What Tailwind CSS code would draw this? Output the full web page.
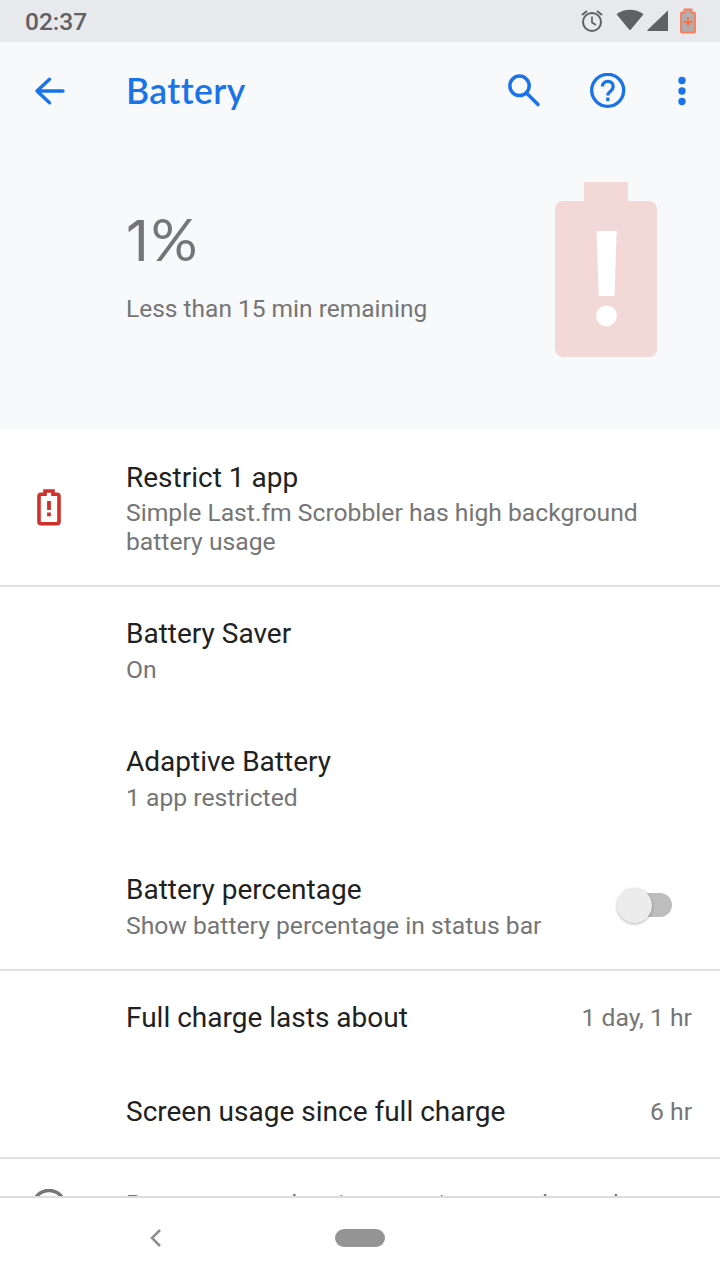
<!DOCTYPE html>
<html lang="en">
<head>
<meta charset="utf-8">
<title>Battery</title>
<script src="https://cdn.jsdelivr.net/npm/@tailwindcss/browser@4"></script>
</head>
<body class="w-[720px] h-[1280px] overflow-hidden bg-white font-['Roboto',sans-serif] text-[#212121] flex flex-col">
  <header class="h-[42px] shrink-0 bg-[#e8e9ed] text-[#5f6165] flex items-center justify-between pl-[25px] pr-6">
    <span class="text-[24.5px] leading-7 font-medium pt-[2px]">02:37</span>
    <div class="flex items-center">
      <svg class="w-6 h-6 mr-3" viewBox="0 0 24 24" fill="none" stroke="currentColor" stroke-width="2"><circle cx="12" cy="13" r="9"/><path d="M12 7.500v6l4 2.500" stroke-width="1.700"/><path d="M2 6l5-4M22 6l-5-4"/></svg>
      <svg class="w-[28px] h-6 mr-[3px]" viewBox="0 0 28 24" fill="currentColor"><path d="M.5 5.200C8.500 -.6 19.500 -.6 27.500 5.200L14.900 20.500q-.9 1-1.800 0z"/></svg>
      <svg class="w-[22px] h-6 mr-[11px]" viewBox="0 0 22 24" fill="currentColor"><path d="M21 2v20H.8q-1 0-.3-.9L20.100 2.200q.9-.7.900-.2z"/></svg>
      <svg class="w-4 h-[26px]" viewBox="0 0 16 26"><path d="M4.500 4.500V1.500h7v3H14q1 0 1 1v18q0 1-1 1H2q-1 0-1-1v-18q0-1 1-1z" fill="#b4adad" stroke="#f77e5b" stroke-width="1.900"/><path d="M8 9.500v9M3.700 14h8.600" stroke="#f77147" stroke-width="2"/></svg>
    </div>
  </header>

  <section class="h-[387px] shrink-0 bg-[#f8f9fb]">
    <div class="h-[98px] flex items-center text-[#1a73e8] pl-[34px] pr-[34px]">
      <svg class="w-8 h-8 mr-[60px]" viewBox="0 0 32 32" fill="none" stroke="currentColor" stroke-width="3.400" stroke-linecap="round" stroke-linejoin="round"><path d="M29 16H3M15.500 4.200L3 16l12.500 11.800"/></svg>
      <h1 class="flex-1 font-['Lato',sans-serif] text-[35.5px] leading-10 font-semibold tracking-[0.4px]">Battery</h1>
      <svg class="w-9 h-9 mr-[47px]" viewBox="0 0 36 36" fill="none" stroke="currentColor" stroke-width="3.500"><circle cx="12.500" cy="12.800" r="9.700"/><path d="M19.500 20L31 31.500" stroke-width="3.600" stroke-linecap="round"/></svg>
      <svg class="w-9 h-9 mr-[52px]" viewBox="0 0 36 36" fill="none" stroke="currentColor" stroke-width="3.300"><circle cx="17.700" cy="17.300" r="16"/><path d="M12.400 13.600c0-6.800 10.800-7.100 10.800-.1 0 4.700-5.400 4.600-5.400 8.900"/><path d="M17.800 24.500v3.600"/></svg>
      <svg class="w-2 h-8" viewBox="0 0 8 32" fill="currentColor"><circle cx="4" cy="5.500" r="3.700"/><circle cx="4" cy="16" r="3.700"/><circle cx="4" cy="26.500" r="3.700"/></svg>
    </div>
    <div class="flex items-start justify-between pl-[126px] pr-[63px] text-[#757575]">
      <div class="pt-[66px]">
        <p class="font-['Lato',sans-serif] text-[58px] leading-[66px] flex items-baseline"><span class="font-['Inter',sans-serif] text-[56px] w-[25px]">1</span><span>%</span></p>
        <p class="text-[24.5px] leading-[29px] mt-5">Less than 15 min remaining</p>
      </div>
      <svg class="w-[102px] h-[176px] mt-[41px]" viewBox="0 0 102 176"><path d="M29 1h44v19h20q9 0 9 9v138q0 9-9 9H9q-9 0-9-9V29q0-9 9-9h20z" fill="#f3d8d8"/><path d="M41.500 50h20.200L59.500 115H43.800z" fill="#fff"/><circle cx="51.500" cy="134.800" r="10.400" fill="#fff"/></svg>
    </div>
  </section>

  <main class="flex-1 min-h-0 overflow-hidden">
    <section class="h-[156px] flex items-center">
      <div class="w-[126px] pl-9">
        <svg class="w-[26px] h-[37px]" viewBox="0 0 26 37"><path d="M9 5.300V2h8v3.300H21q2 0 2 2v25.500q0 2-2 2H5q-2 0-2-2V7.300q0-2 2-2z" fill="none" stroke="#d0302b" stroke-width="3.600"/><path d="M13 12v9M13 23.500v3.700" stroke="#d0302b" stroke-width="3.800"/></svg>
      </div>
      <div class="pt-[3px]">
        <h2 class="text-[28px] leading-[33px] mb-1">Restrict 1 app</h2>
        <p class="text-[24.700px] leading-[29px] text-[#757575]">Simple Last.fm Scrobbler has high background<br>battery usage</p>
      </div>
    </section>

    <section class="relative pl-[126px] before:absolute before:left-0 before:top-0 before:h-[2px] before:w-full before:bg-[#e0e0e0]">
      <div class="h-32 flex flex-col justify-center pt-[3px]">
        <h2 class="text-[28px] leading-[33px] mb-[5px]">Battery Saver</h2>
        <p class="text-[24.700px] leading-[29px] text-[#757575]">On</p>
      </div>
      <div class="h-32 flex flex-col justify-center pt-[3px]">
        <h2 class="text-[28px] leading-[33px] mb-[5px]">Adaptive Battery</h2>
        <p class="text-[24.700px] leading-[29px] text-[#757575]">1 app restricted</p>
      </div>
      <div class="h-32 flex items-center justify-between pr-12 pt-[3px]">
        <div>
          <h2 class="text-[28px] leading-[33px] mb-[5px]">Battery percentage</h2>
          <p class="text-[24.700px] leading-[29px] text-[#757575]">Show battery percentage in status bar</p>
        </div>
        <div class="w-[56px] h-9 flex items-center relative justify-end mb-[2px]">
          <div class="w-11 h-6 rounded-full bg-[#bdbdbd] mb-px"></div>
          <div class="absolute left-[1px] top-0 w-[35px] h-[35px] rounded-full bg-[#ececec] shadow-[0_1px_3px_rgba(0,0,0,0.3)]"></div>
        </div>
      </div>
    </section>

    <section class="relative pl-[126px] pr-[28px] before:absolute before:left-0 before:top-0 before:h-[2px] before:w-full before:bg-[#e0e0e0]">
      <div class="h-[94px] flex items-center justify-between pt-[3px]">
        <h2 class="text-[28px] leading-[33px]">Full charge lasts about</h2>
        <span class="text-[24.700px] leading-[29px] text-[#757575]">1 day, 1 hr</span>
      </div>
      <div class="h-[94px] flex items-center justify-between pt-[3px]">
        <h2 class="text-[28px] leading-[33px]">Screen usage since full charge</h2>
        <span class="text-[24.700px] leading-[29px] text-[#757575]">6 hr</span>
      </div>
    </section>

    <section class="relative flex pt-[32px] before:absolute before:left-0 before:top-0 before:h-[2px] before:w-full before:bg-[#e0e0e0]">
      <div class="w-[126px] pl-[31px]">
        <svg class="w-9 h-9" viewBox="0 0 36 36" fill="none" stroke="#757575" stroke-width="3.500"><circle cx="18" cy="17.500" r="16"/><path d="M18 16v10M18 9v3.500"/></svg>
      </div>
      <p class="text-[24.700px] leading-[29px] text-[#757575] whitespace-nowrap">Battery usage data is approximate and can change</p>
    </section>
  </main>

  <nav class="h-[84px] shrink-0 border-t-2 border-[#dcdcdc] bg-white flex items-center pl-[149px] pb-[2px]">
    <svg class="w-3 h-5" viewBox="0 0 12 20" fill="none" stroke="#8e8e8e" stroke-width="2.500"><path d="M11 2L3 10l8 8"/></svg>
    <div class="ml-[174px] w-[50px] h-[18px] rounded-full bg-[#949494]"></div>
  </nav>
</body>
</html>
